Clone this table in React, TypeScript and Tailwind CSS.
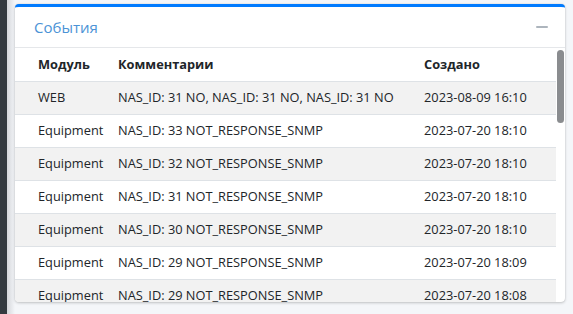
import React from 'react';

interface EventRow {
  module: string;
  comment: string;
  created: string;
}

const EVENTS: EventRow[] = [
  { module: 'WEB', comment: 'NAS_ID: 31 NO, NAS_ID: 31 NO, NAS_ID: 31 NO', created: '2023-08-09 16:10' },
  { module: 'Equipment', comment: 'NAS_ID: 33 NOT_RESPONSE_SNMP', created: '2023-07-20 18:10' },
  { module: 'Equipment', comment: 'NAS_ID: 32 NOT_RESPONSE_SNMP', created: '2023-07-20 18:10' },
  { module: 'Equipment', comment: 'NAS_ID: 31 NOT_RESPONSE_SNMP', created: '2023-07-20 18:10' },
  { module: 'Equipment', comment: 'NAS_ID: 30 NOT_RESPONSE_SNMP', created: '2023-07-20 18:10' },
  { module: 'Equipment', comment: 'NAS_ID: 29 NOT_RESPONSE_SNMP', created: '2023-07-20 18:09' },
  { module: 'Equipment', comment: 'NAS_ID: 29 NOT_RESPONSE_SNMP', created: '2023-07-20 18:08' },
];

export default function App() {
  return (
    <div
      className="flex h-[314px] w-[573px] overflow-hidden bg-[#f4f6f9] text-[#212529]"
      style={{ fontFamily: '"Open Sans", "Noto Sans", sans-serif' }}
    >
      {/* sidebar edge */}
      <div className="w-[7px] shrink-0 bg-[#343a40]" />
      <div className="w-[8px] shrink-0 bg-gradient-to-r from-[#d5d7db] to-[#f4f6f9]" />

      <div className="flex-1 pt-[4px] pr-[8px] pb-[12px]">
        <div className="flex h-full flex-col overflow-hidden rounded-[4px] border-t-[3px] border-[#007bff] bg-white shadow-[0_0_1px_rgba(0,0,0,0.2),0_1px_3px_rgba(0,0,0,0.2)]">
          {/* Header */}
          <div className="flex h-[41px] shrink-0 items-center justify-between border-b border-[#e5e7ea] pl-[19px] pr-[17px]">
            <h3 className="text-[15px] text-[#4b93d6]">События</h3>
            <div className="h-[2px] w-[12px] rounded-full bg-[#adb5bd]" />
          </div>

          {/* Table */}
          <div className="relative flex-1 overflow-hidden pr-[9px]">
            <table className="w-full table-fixed border-collapse text-[12.8px]">
              <thead>
                <tr className="h-[33px] border-b border-[#dee2e6]">
                  <th className="w-[91px] pl-[23px] text-left font-bold">Модуль</th>
                  <th className="w-[306px] pl-[12px] text-left font-bold">Комментарии</th>
                  <th className="pl-[12px] text-left font-bold">Создано</th>
                </tr>
              </thead>
              <tbody>
                {EVENTS.map((e, i) => (
                  <tr
                    key={i}
                    className={`h-[33px] border-b border-[#dee2e6] ${i % 2 === 0 ? 'bg-[#f2f2f2]' : 'bg-white'}`}
                  >
                    <td className="pl-[23px] whitespace-nowrap">{e.module}</td>
                    <td className="pl-[12px] whitespace-nowrap">{e.comment}</td>
                    <td className="pl-[12px] whitespace-nowrap">{e.created}</td>
                  </tr>
                ))}
              </tbody>
            </table>
            {/* scrollbar thumb */}
            <div className="absolute right-[1px] top-[2px] h-[73px] w-[7px] rounded-full bg-[#8a8c8f]" />
          </div>
        </div>
      </div>
    </div>
  );
}
